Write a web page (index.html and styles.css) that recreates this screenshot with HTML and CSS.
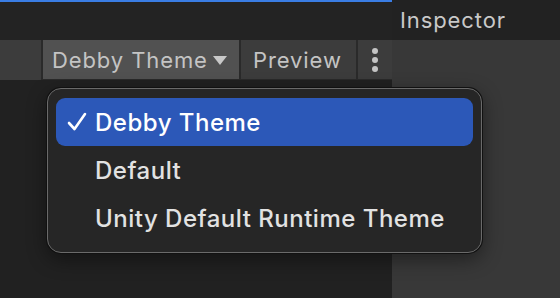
FILE: index.html
```html
<!DOCTYPE html>
<html lang="en">

<head>
    <meta charset="UTF-8">
    <title>Theme Menu</title>
    <link rel="stylesheet" href="styles.css">
</head>

<body>
    <div id="window">
        <div class="tab-row">
            <div class="tab-strip"></div>
            <div class="inspector-tab">Inspector</div>
        </div>
        <div class="main-row">
            <div class="scene">
                <div class="toolbar">
                    <div class="tool-block"></div>
                    <div class="tool-button active">Debby Theme<span class="caret"></span></div>
                    <div class="tool-button preview">Preview</div>
                    <div class="tool-button more">
                        <span class="dot"></span><span class="dot"></span><span class="dot"></span>
                    </div>
                </div>
                <div class="viewport"></div>
            </div>
            <div class="inspector"></div>
        </div>

        <div id="themeMenu">
            <div class="menu-item selected">
                <svg class="check" width="20" height="20" viewBox="0 0 20 20">
                    <path d="M2 11 L7.5 17 L18 2" fill="none" stroke="#ffffff" stroke-width="2.6" stroke-linecap="round" stroke-linejoin="round" />
                </svg>Debby Theme
            </div>
            <div class="menu-item">Default</div>
            <div class="menu-item">Unity Default Runtime Theme</div>
        </div>
    </div>
</body>

</html>
```

FILE: styles.css
```css
body {
    margin: 0;
    font-family: Inter, "Open Sans", sans-serif;
    background-color: #212121;
    overflow: hidden;
}

#window {
    position: relative;
    width: 560px;
    height: 298px;
    display: flex;
    flex-direction: column;
}

.tab-row {
    display: flex;
    height: 40px;
}

.tab-strip {
    width: 392px;
    background-color: #232323;
    border-top: 2px solid #3a7de4;
}

.inspector-tab {
    flex: 1;
    background-color: #222222;
    color: #c9c9c9;
    font-size: 22px;
    letter-spacing: 0.9px;
    padding-left: 8px;
    line-height: 40px;
}

.main-row {
    display: flex;
    flex: 1;
}

.scene {
    width: 392px;
    display: flex;
    flex-direction: column;
}

.toolbar {
    display: flex;
    gap: 2px;
    height: 40px;
    background-color: #2a2a2a;
}

.tool-block {
    width: 41px;
    background-color: #3c3c3c;
}

.tool-button {
    display: flex;
    align-items: center;
    background-color: #3c3c3c;
    color: #c4c4c4;
    font-size: 22px;
    letter-spacing: 0.9px;
    height: 38px;
    padding-top: 1px;
}

.tool-button.active {
    width: 187px;
    padding-left: 9px;
    background-color: #515151;
}

.caret {
    margin-left: 5px;
    width: 0;
    height: 0;
    border-left: 7px solid transparent;
    border-right: 7px solid transparent;
    border-top: 9px solid #c8c8c8;
}

.tool-button.preview {
    width: 103px;
    padding-left: 12px;
}

.tool-button.more {
    flex: 1;
    flex-direction: column;
    justify-content: center;
    gap: 3px;
}

.dot {
    width: 6px;
    height: 6px;
    border-radius: 50%;
    background-color: #c4c4c4;
}

.viewport {
    flex: 1;
    background-color: #212121;
}

.inspector {
    flex: 1;
    background-color: #383838;
}

#themeMenu {
    position: absolute;
    left: 47px;
    top: 88px;
    width: 417px;
    height: 145px;
    padding: 9px 8px;
    background-color: #262626;
    border: 1px solid #6a6a6a;
    border-radius: 14px;
    box-shadow: 0 0 0 1px #111, 0 6px 20px rgba(0, 0, 0, 0.45);
}

.menu-item {
    position: relative;
    height: 48px;
    line-height: 49px;
    padding-left: 39px;
    color: #e2e2e2;
    font-size: 24px;
    font-weight: 500;
    letter-spacing: 0.5px;
    border-radius: 9px;
}

.menu-item.selected {
    background-color: #2c58b8;
    color: #ffffff;
}

.check {
    position: absolute;
    left: 11px;
    top: 14px;
}
```
